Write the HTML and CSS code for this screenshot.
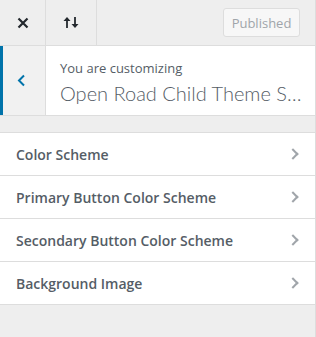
FILE: index.html
```html
<!DOCTYPE html>
<html lang="en">
<head>
  <meta charset="UTF-8">
  <title>Customize</title>
  <link rel="stylesheet" href="styles.css">
</head>
<body>
  <div class="sidebar">
    <div class="topbar">
      <button class="tb-btn close-btn" aria-label="Close">
        <svg width="12" height="12" viewBox="0 0 12 12"><path d="M1.5 1.5 L10.5 10.5 M10.5 1.5 L1.5 10.5" stroke="#23282d" stroke-width="2.2" fill="none"/></svg>
      </button>
      <button class="tb-btn sort-btn" aria-label="Reorder">
        <svg width="18" height="13" viewBox="0 0 18 13"><path d="M5 12 V3" stroke="#23282d" stroke-width="1.8" fill="none"/><path d="M1.5 5 L5 1 L8.5 5 Z" fill="#23282d"/><path d="M13 1 V10" stroke="#23282d" stroke-width="1.8" fill="none"/><path d="M9.5 8 L13 12 L16.5 8 Z" fill="#23282d"/></svg>
      </button>
      <button class="publish-btn" disabled>Published</button>
    </div>

    <div class="info">
      <button class="back-btn" aria-label="Back">
        <svg width="9" height="13" viewBox="0 0 9 13"><path d="M7 1.5 L2 6.5 L7 11.5" stroke="#0073aa" stroke-width="2" fill="none"/></svg>
      </button>
      <div class="info-text">
        <span class="info-label">You are customizing</span>
        <span class="info-title">Open Road Child Theme Settings</span>
      </div>
    </div>

    <ul class="sections">
      <li class="section">Color Scheme <span class="chev"></span></li>
      <li class="section">Primary Button Color Scheme <span class="chev"></span></li>
      <li class="section">Secondary Button Color Scheme <span class="chev"></span></li>
      <li class="section">Background Image <span class="chev"></span></li>
    </ul>
  </div>
</body>
</html>
```

FILE: styles.css
```css
* { box-sizing: border-box; }
body {
  margin: 0;
  font-family: "Open Sans", "Noto Sans", sans-serif;
  color: #555d66;
  background: #eee;
}
.sidebar {
  width: 316px;
  height: 337px;
  background: #eee;
  border-right: 1px solid #ddd;
}
.topbar {
  display: flex;
  align-items: center;
  height: 46px;
  border-bottom: 1px solid #ddd;
}
.tb-btn {
  height: 45px;
  padding: 0;
  border: none;
  border-right: 1px solid #ddd;
  background: transparent;
  display: flex;
  align-items: center;
  justify-content: center;
}
.close-btn { width: 46px; }
.sort-btn { width: 51px; }
.publish-btn {
  margin-left: auto;
  margin-right: 15px;
  width: 77px;
  height: 29px;
  font-family: inherit;
  font-size: 13px;
  color: #a0a5aa;
  background: #f7f7f7;
  border: 1px solid #ddd;
  border-radius: 3px;
  padding: 0;
}
.info {
  display: flex;
  height: 70px;
  background: #fff;
  border-bottom: 1px solid #ddd;
}
.back-btn {
  flex-shrink: 0;
  width: 46px;
  padding: 0;
  border: none;
  border-left: 3px solid #0073aa;
  border-right: 1px solid #ddd;
  background: #f1f1f1;
  display: flex;
  align-items: center;
  justify-content: center;
}
.back-btn svg { margin-left: -6px; }
.info-text {
  display: flex;
  flex-direction: column;
  padding: 13px 12px 0 14px;
  min-width: 0;
}
.info-label {
  font-size: 13px;
  line-height: 18px;
}
.info-title {
  font-family: Lato, "Open Sans", sans-serif;
  font-size: 20px;
  font-weight: 300;
  line-height: 30px;
  margin-top: 1px;
  white-space: nowrap;
  overflow: hidden;
  text-overflow: ellipsis;
}
.sections {
  list-style: none;
  margin: 16px 0 0;
  padding: 0;
  border-top: 1px solid #ddd;
}
.section {
  display: flex;
  align-items: center;
  justify-content: space-between;
  height: 43px;
  padding: 0 18px 0 16px;
  background: #fff;
  border-bottom: 1px solid #ddd;
  font-size: 14px;
  font-weight: 600;
}
.chev {
  width: 8px;
  height: 8px;
  border-top: 2px solid #a0a5aa;
  border-right: 2px solid #a0a5aa;
  transform: rotate(45deg);
}
```
